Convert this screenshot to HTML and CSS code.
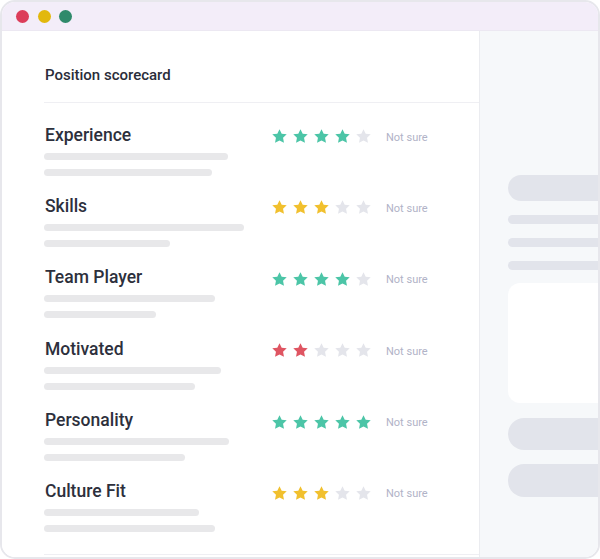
FILE: index.html
```html
<!DOCTYPE html>
<html>
<head>
<meta charset="utf-8">
<link rel="stylesheet" href="styles.css">
</head>
<body>
<svg width="0" height="0" class="defs">
  <defs>
    <path id="star" d="M12 1.6l3.1 6.4 7.1.9-5.2 4.9 1.3 7.1L12 17.5 5.7 20.9 7 13.8 1.8 8.9l7.1-.9z"/>
  </defs>
</svg>
<div class="window">
  <div class="titlebar">
    <span class="dot red"></span>
    <span class="dot yellow"></span>
    <span class="dot green"></span>
  </div>
  <div class="main">
    <div class="left">
      <div class="header">Position scorecard</div>

      <div class="row">
        <div class="line">
          <div class="title">Experience</div>
          <div class="stars teal">
            <svg class="on" viewBox="0 0 24 24"><use href="#star"/></svg>
            <svg class="on" viewBox="0 0 24 24"><use href="#star"/></svg>
            <svg class="on" viewBox="0 0 24 24"><use href="#star"/></svg>
            <svg class="on" viewBox="0 0 24 24"><use href="#star"/></svg>
            <svg class="off" viewBox="0 0 24 24"><use href="#star"/></svg>
          </div>
          <div class="unsure">Not sure</div>
        </div>
        <div class="bar" style="width:184px"></div>
        <div class="bar" style="width:168px"></div>
      </div>

      <div class="row">
        <div class="line">
          <div class="title">Skills</div>
          <div class="stars yellow">
            <svg class="on" viewBox="0 0 24 24"><use href="#star"/></svg>
            <svg class="on" viewBox="0 0 24 24"><use href="#star"/></svg>
            <svg class="on" viewBox="0 0 24 24"><use href="#star"/></svg>
            <svg class="off" viewBox="0 0 24 24"><use href="#star"/></svg>
            <svg class="off" viewBox="0 0 24 24"><use href="#star"/></svg>
          </div>
          <div class="unsure">Not sure</div>
        </div>
        <div class="bar" style="width:200px"></div>
        <div class="bar" style="width:126px"></div>
      </div>

      <div class="row">
        <div class="line">
          <div class="title">Team Player</div>
          <div class="stars teal">
            <svg class="on" viewBox="0 0 24 24"><use href="#star"/></svg>
            <svg class="on" viewBox="0 0 24 24"><use href="#star"/></svg>
            <svg class="on" viewBox="0 0 24 24"><use href="#star"/></svg>
            <svg class="on" viewBox="0 0 24 24"><use href="#star"/></svg>
            <svg class="off" viewBox="0 0 24 24"><use href="#star"/></svg>
          </div>
          <div class="unsure">Not sure</div>
        </div>
        <div class="bar" style="width:171px"></div>
        <div class="bar" style="width:112px"></div>
      </div>

      <div class="row">
        <div class="line">
          <div class="title">Motivated</div>
          <div class="stars red">
            <svg class="on" viewBox="0 0 24 24"><use href="#star"/></svg>
            <svg class="on" viewBox="0 0 24 24"><use href="#star"/></svg>
            <svg class="off" viewBox="0 0 24 24"><use href="#star"/></svg>
            <svg class="off" viewBox="0 0 24 24"><use href="#star"/></svg>
            <svg class="off" viewBox="0 0 24 24"><use href="#star"/></svg>
          </div>
          <div class="unsure">Not sure</div>
        </div>
        <div class="bar" style="width:177px"></div>
        <div class="bar" style="width:151px"></div>
      </div>

      <div class="row">
        <div class="line">
          <div class="title">Personality</div>
          <div class="stars teal">
            <svg class="on" viewBox="0 0 24 24"><use href="#star"/></svg>
            <svg class="on" viewBox="0 0 24 24"><use href="#star"/></svg>
            <svg class="on" viewBox="0 0 24 24"><use href="#star"/></svg>
            <svg class="on" viewBox="0 0 24 24"><use href="#star"/></svg>
            <svg class="on" viewBox="0 0 24 24"><use href="#star"/></svg>
          </div>
          <div class="unsure">Not sure</div>
        </div>
        <div class="bar" style="width:185px"></div>
        <div class="bar" style="width:141px"></div>
      </div>

      <div class="row">
        <div class="line">
          <div class="title">Culture Fit</div>
          <div class="stars yellow">
            <svg class="on" viewBox="0 0 24 24"><use href="#star"/></svg>
            <svg class="on" viewBox="0 0 24 24"><use href="#star"/></svg>
            <svg class="on" viewBox="0 0 24 24"><use href="#star"/></svg>
            <svg class="off" viewBox="0 0 24 24"><use href="#star"/></svg>
            <svg class="off" viewBox="0 0 24 24"><use href="#star"/></svg>
          </div>
          <div class="unsure">Not sure</div>
        </div>
        <div class="bar" style="width:155px"></div>
        <div class="bar" style="width:171px"></div>
      </div>
      <div class="footline"></div>
    </div>
    <div class="right">
      <div class="pill small"></div>
      <div class="stroke first"></div>
      <div class="stroke"></div>
      <div class="stroke"></div>
      <div class="card"></div>
      <div class="pill big"></div>
      <div class="pill big second"></div>
    </div>
  </div>
</div>
</body>
</html>
```

FILE: styles.css
```css
* { box-sizing: border-box; }
html, body {
  margin: 0;
  padding: 0;
  background: #ffffff;
}
body {
  font-family: Roboto, "Liberation Sans", sans-serif;
  width: 600px;
  height: 559px;
  overflow: hidden;
}
.defs {
  position: absolute;
  width: 0;
  height: 0;
}
.window {
  width: 600px;
  height: 559px;
  border: 2px solid #e7e7ec;
  border-radius: 15px;
  overflow: hidden;
  display: flex;
  flex-direction: column;
  background: #ffffff;
}
.titlebar {
  height: 29px;
  flex: none;
  background: #f3edf9;
  border-bottom: 1px solid #ece8f2;
  display: flex;
  align-items: center;
  padding-left: 14px;
  gap: 8.5px;
}
.dot {
  width: 13px;
  height: 13px;
  border-radius: 50%;
  display: block;
}
.dot.red { background: #dc3d5a; }
.dot.yellow { background: #e2b80d; }
.dot.green { background: #2f8a6b; }

.main {
  flex: 1;
  display: flex;
  min-height: 0;
}
.left {
  width: 477px;
  flex: none;
  background: #ffffff;
  padding-left: 42px;
  display: flex;
  flex-direction: column;
}
.header {
  height: 72px;
  padding-top: 34px;
  font-size: 15px;
  font-weight: 500;
  color: #2a2d39;
  line-height: 20px;
  border-bottom: 1px solid #efeff3;
  padding-left: 1px;
}
.row {
  height: 71.4px;
  flex: none;
  padding-top: 19.5px;
}
.line {
  height: 24px;
  display: flex;
  align-items: center;
}
.title {
  width: 227px;
  font-size: 17.5px;
  font-weight: 500;
  color: #2d303c;
  padding-left: 1px;
  line-height: 24px;
}
.stars {
  display: flex;
  gap: 4px;
  width: 115px;
  position: relative;
  top: 2px;
}
.stars svg {
  width: 17px;
  height: 17px;
  display: block;
}
.stars svg.off { fill: #e4e5eb; }
.teal svg.on { fill: #4cc5a7; }
.yellow svg.on { fill: #f1c02e; }
.red svg.on { fill: #df5562; }
.unsure {
  font-size: 11px;
  color: #b1b3c7;
  line-height: 16px;
  position: relative;
  top: 3px;
}
.bar {
  height: 7px;
  border-radius: 4px;
  background: #e8e8ea;
  margin-top: 6px;
}
.bar + .bar {
  margin-top: 9px;
}
.footline {
  margin-top: auto;
  height: 1px;
  background: #efeff3;
  margin-bottom: 2px;
}
.right {
  flex: 1;
  background: #f6f8fa;
  border-left: 1px solid #ebecf0;
  padding-left: 28px;
  padding-top: 144px;
  display: flex;
  flex-direction: column;
}
.pill {
  background: #e2e4eb;
  border-radius: 16px 0 0 16px;
}
.pill.small {
  height: 26px;
  border-radius: 13px 0 0 13px;
}
.stroke {
  height: 9px;
  border-radius: 5px 0 0 5px;
  background: #e2e4eb;
  margin-top: 14px;
}
.stroke.first { margin-top: 14px; }
.card {
  height: 120px;
  margin-top: 13px;
  background: #ffffff;
  border-radius: 12px 0 0 12px;
}
.pill.big {
  height: 32px;
  margin-top: 15px;
}
.pill.big.second {
  height: 33px;
  margin-top: 14px;
}
```
